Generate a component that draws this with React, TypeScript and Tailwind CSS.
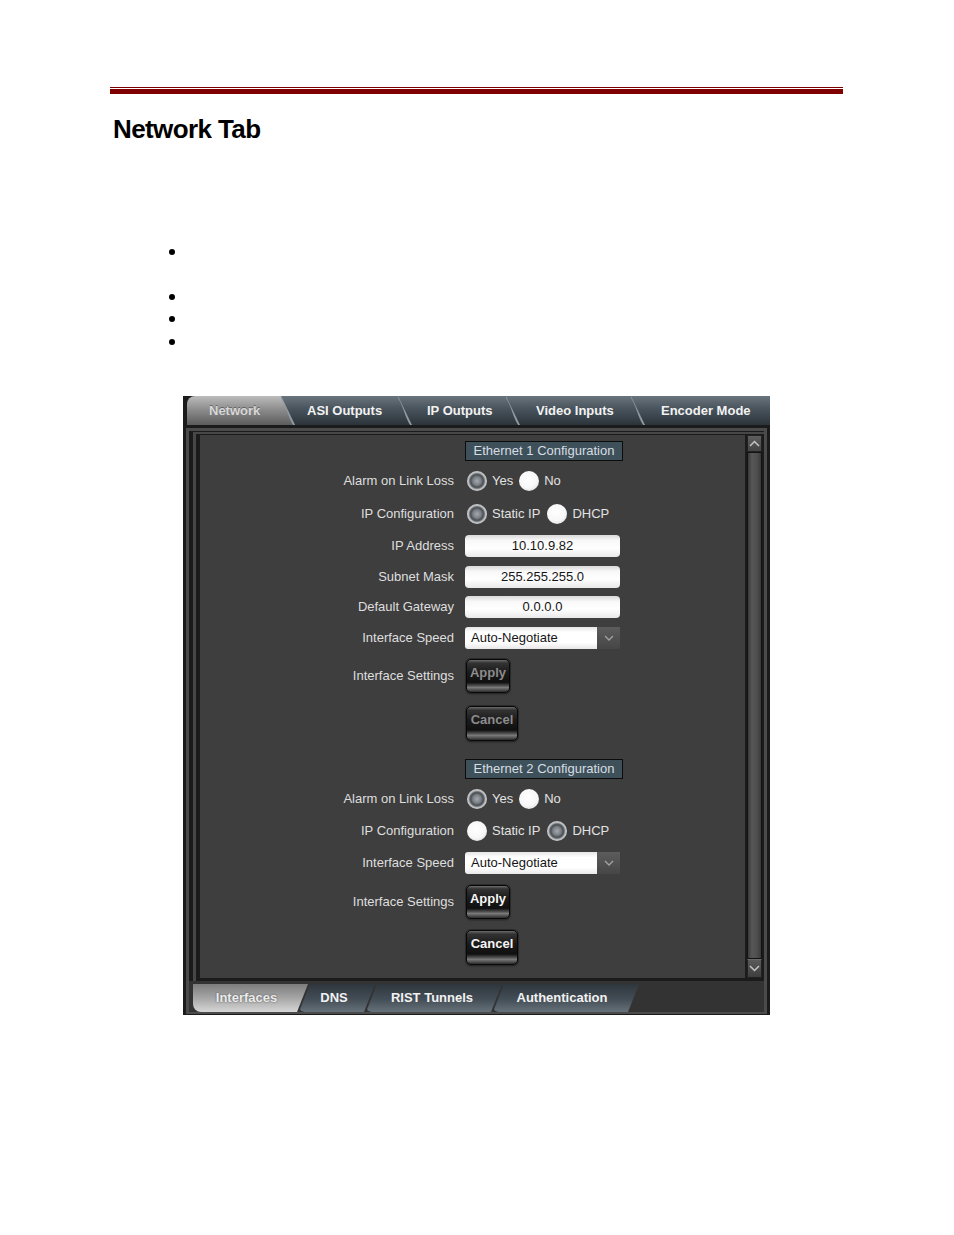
import React from "react";

const TOP_CLIP = "[clip-path:polygon(0_0,calc(100%_-_14px)_0,100%_100%,0_100%)]";
const BOT_FIRST = "[clip-path:polygon(0_0,100%_0,calc(100%_-_11px)_100%,0_100%)]";
const BOT_CLIP = "[clip-path:polygon(11px_0,100%_0,calc(100%_-_11px)_100%,0_100%)]";

const TAB_OFF =
  "bg-[linear-gradient(to_bottom,#6a757e_0%,#4b565f_40%,#2c343a_100%)] text-[#f2f2f2]";
const TAB_ON =
  "bg-[linear-gradient(to_bottom,#bcbcbc_0%,#8e8e8e_45%,#5c5c5c_100%)] text-[#d8d8d8] [text-shadow:0_-1px_0_rgba(0,0,0,0.35)]";
const BTAB_OFF =
  "bg-[linear-gradient(to_bottom,#2f373d_0%,#444e56_55%,#66717a_100%)] text-[#f2f2f2]";
const BTAB_ON =
  "bg-[linear-gradient(to_bottom,#7c7c7c_0%,#a6a6a6_50%,#d6d6d6_100%)] text-[#ececec] [text-shadow:0_0_2px_rgba(0,0,0,0.55)]";

function Slant() {
  return (
    <svg
      className="absolute right-0 top-0 h-full w-[14px]"
      viewBox="0 0 14 29"
      preserveAspectRatio="none"
    >
      <path d="M0 0 C 6 5, 8 22, 14 29" stroke="#8e99a1" strokeWidth="3" fill="none" />
    </svg>
  );
}

function Radio({ on, className = "" }: { on?: boolean; className?: string }) {
  return (
    <span
      className={
        on
          ? `inline-block shrink-0 w-[20px] h-[20px] rounded-full bg-[radial-gradient(circle,#a4aaaf_0%,#787e84_30%,#4b5055_44%,#5e6367_50%,#b7babc_60%,#e4e4e4_82%,#c6c6c6_100%)] ${className}`
          : `inline-block shrink-0 w-[20px] h-[20px] rounded-full bg-[radial-gradient(circle_at_45%_40%,#ffffff_0%,#f7f7f7_55%,#d6d6d6_90%,#bcbcbc_100%)] ${className}`
      }
    />
  );
}

function Row({
  label,
  className = "",
  children,
}: {
  label: string;
  className?: string;
  children: React.ReactNode;
}) {
  return (
    <div className={`flex items-center ${className}`}>
      <div className="w-[254px] shrink-0 text-right text-[13px] leading-[16px] text-[#dedede]">
        {label}
      </div>
      <div className="ml-[11px] flex items-center text-[13px] leading-[16px] text-[#e2e2e2]">
        {children}
      </div>
    </div>
  );
}

function Field({ value }: { value: string }) {
  return (
    <div className="w-[155px] h-[22px] rounded-[4px] bg-[linear-gradient(to_bottom,#d9d9d9_0%,#f8f8f8_25%,#ffffff_60%,#e9e9e9_100%)] text-center text-[13px] leading-[22px] text-[#141414]">
      {value}
    </div>
  );
}

function Select() {
  return (
    <div className="flex h-[22px]">
      <div className="w-[132px] h-full rounded-l-[3px] bg-[linear-gradient(to_bottom,#e6e6e6_0%,#ffffff_25%,#ffffff_70%,#e8e8e8_100%)] pl-[6px] text-[13px] leading-[22px] text-[#141414]">
        Auto-Negotiate
      </div>
      <div className="w-[23px] h-full bg-[linear-gradient(to_bottom,#5c5c5c,#464646)] flex items-center justify-center">
        <svg width="10" height="6" viewBox="0 0 10 6">
          <polyline points="1,1 5,5 9,1" fill="none" stroke="#a3a3a3" strokeWidth="1.3" />
        </svg>
      </div>
    </div>
  );
}

function Btn({
  label,
  enabled,
  className = "",
}: {
  label: string;
  enabled?: boolean;
  className?: string;
}) {
  return (
    <div
      className={`ml-[1px] rounded-[5px] border border-[#080808] shadow-[0_0_0_1px_#2a2a2a,0_1px_2px_rgba(0,0,0,0.6)] bg-[linear-gradient(to_bottom,#6b6b6b_0%,#333333_9%,#1a1a1a_40%,#101010_70%,#4e4e4e_80%,#7a7a7a_86%,#2b2b2b_100%)] flex justify-center pt-[5px] text-[13px] leading-[16px] font-bold ${
        enabled ? "text-[#f5f5f5]" : "text-[#8c8c8c]"
      } ${className}`}
    >
      {label}
    </div>
  );
}

function Header({ text, className = "" }: { text: string; className?: string }) {
  return (
    <div
      className={`ml-[265px] w-[158px] h-[20px] border border-[#0c0c0c] bg-[#3e515b] text-center text-[13px] leading-[18px] text-[#d6dde1] ${className}`}
    >
      {text}
    </div>
  );
}

function Chevron({ up }: { up?: boolean }) {
  return (
    <svg width="11" height="7" viewBox="0 0 11 7">
      <polyline
        points={up ? "1,6 5.5,1.5 10,6" : "1,1 5.5,5.5 10,1"}
        fill="none"
        stroke="#c4c4c4"
        strokeWidth="1.5"
      />
    </svg>
  );
}

export default function App() {
  return (
    <div className="w-[954px] h-[1235px] bg-white overflow-hidden [font-family:'Liberation_Sans',Arial,sans-serif]">
      {/* header rule */}
      <div className="pt-[87px] pl-[110px]">
        <div className="w-[733px] h-[1px] bg-[#7d0000]" />
        <div className="w-[733px] h-[5px] mt-[1px] bg-[#800000]" />
      </div>

      <h1 className="mt-[20px] ml-[113px] text-[26px] leading-[30px] tracking-[-0.6px] font-bold text-black">
        Network Tab
      </h1>

      {/* bullets */}
      <ul className="ml-[169px]">
        <li className="mt-[105px] w-[6px] h-[6px] rounded-full bg-black" />
        <li className="mt-[39px] w-[6px] h-[6px] rounded-full bg-black" />
        <li className="mt-[16px] w-[6px] h-[6px] rounded-full bg-black" />
        <li className="mt-[17px] w-[6px] h-[6px] rounded-full bg-black" />
      </ul>

      {/* screenshot panel */}
      <div className="mt-[51px] ml-[183px] w-[587px] h-[619px] bg-[#1b1b1b] flex flex-col">
        {/* top tabs */}
        <div className="h-[29px] shrink-0 flex pl-[4px] text-[13px] font-bold">
          <div className={`relative z-[5] w-[108px] h-full rounded-tl-[8px] pl-[22px] flex items-center ${TOP_CLIP} ${TAB_ON}`}>
            Network
            <Slant />
          </div>
          <div className={`relative z-[4] -ml-[14px] w-[131px] h-full pl-[26px] flex items-center ${TOP_CLIP} ${TAB_OFF}`}>
            ASI Outputs
            <Slant />
          </div>
          <div className={`relative z-[3] -ml-[14px] w-[122px] h-full pl-[29px] flex items-center ${TOP_CLIP} ${TAB_OFF}`}>
            IP Outputs
            <Slant />
          </div>
          <div className={`relative z-[2] -ml-[14px] w-[139px] h-full pl-[30px] flex items-center ${TOP_CLIP} ${TAB_OFF}`}>
            Video Inputs
            <Slant />
          </div>
          <div className={`relative z-[1] -ml-[14px] w-[139px] h-full pl-[30px] flex items-center ${TAB_OFF}`}>
            Encoder Mode
          </div>
        </div>

        {/* body */}
        <div className="flex-1 min-h-0 flex flex-col pt-[3px] px-[3px] pb-[1px]">
          <div className="flex-1 min-h-0 flex flex-col border-[3px] border-b-[2px] border-[#4b4b4b] bg-[#1b1b1b]">
            {/* inner panel */}
            <div className="flex-1 min-h-0 flex pl-[4px] pt-[1px]">
              <div className="flex-1 min-h-0 flex border-l-[3px] border-t-[2px] border-[#474747] pl-[4px] pt-[1px] pb-[3px] bg-[#1b1b1b]">
                <div className="flex-1 bg-[#3e3e3e] flex flex-col">
                  <Header text="Ethernet 1 Configuration" className="mt-[6px]" />
                  <Row label="Alarm on Link Loss" className="mt-[7px] h-[26px]">
                    <Radio on className="ml-[2px]" />
                    <span className="ml-[5px]">Yes</span>
                    <Radio className="ml-[6px]" />
                    <span className="ml-[5px]">No</span>
                  </Row>
                  <Row label="IP Configuration" className="mt-[7px] h-[26px]">
                    <Radio on className="ml-[2px]" />
                    <span className="ml-[5px]">Static IP</span>
                    <Radio className="ml-[7px]" />
                    <span className="ml-[5px]">DHCP</span>
                  </Row>
                  <Row label="IP Address" className="mt-[8px] h-[22px]">
                    <Field value="10.10.9.82" />
                  </Row>
                  <Row label="Subnet Mask" className="mt-[9px] h-[22px]">
                    <Field value="255.255.255.0" />
                  </Row>
                  <Row label="Default Gateway" className="mt-[8px] h-[22px]">
                    <Field value="0.0.0.0" />
                  </Row>
                  <Row label="Interface Speed" className="mt-[9px] h-[22px]">
                    <Select />
                  </Row>
                  <Row label="Interface Settings" className="mt-[10px] h-[34px]">
                    <Btn label="Apply" className="w-[44px] h-[34px]" />
                  </Row>
                  <div className="mt-[13px] ml-[265px]">
                    <Btn label="Cancel" className="w-[52px] h-[35px]" />
                  </div>

                  <Header text="Ethernet 2 Configuration" className="mt-[18px]" />
                  <Row label="Alarm on Link Loss" className="mt-[7px] h-[26px]">
                    <Radio on className="ml-[2px]" />
                    <span className="ml-[5px]">Yes</span>
                    <Radio className="ml-[6px]" />
                    <span className="ml-[5px]">No</span>
                  </Row>
                  <Row label="IP Configuration" className="mt-[6px] h-[26px]">
                    <Radio className="ml-[2px]" />
                    <span className="ml-[5px]">Static IP</span>
                    <Radio on className="ml-[7px]" />
                    <span className="ml-[5px]">DHCP</span>
                  </Row>
                  <Row label="Interface Speed" className="mt-[8px] h-[22px]">
                    <Select />
                  </Row>
                  <Row label="Interface Settings" className="mt-[11px] h-[34px]">
                    <Btn label="Apply" enabled className="w-[44px] h-[34px]" />
                  </Row>
                  <div className="mt-[11px] ml-[265px]">
                    <Btn label="Cancel" enabled className="w-[52px] h-[35px]" />
                  </div>
                </div>

                {/* scrollbar */}
                <div className="w-[15px] ml-[2px] mr-[2px] flex flex-col">
                  <div className="h-[17px] bg-[linear-gradient(to_bottom,#5e5e5e,#444444)] border border-[#222222] flex items-center justify-center">
                    <Chevron up />
                  </div>
                  <div className="flex-1 border border-[#121212] bg-[linear-gradient(to_right,#3a3a3a,#565656_30%,#4e4e4e_70%,#3a3a3a)]" />
                  <div className="h-[19px] bg-[linear-gradient(to_bottom,#5a5a5a,#3e3e3e)] border border-[#222222] border-t-[#6a6a6a] flex items-center justify-center">
                    <Chevron />
                  </div>
                </div>
              </div>
            </div>

            {/* bottom tabs */}
            <div className="h-[31px] shrink-0 bg-[#333333] flex pl-[4px] pt-[3px] text-[13px] font-bold">
              <div className={`relative z-[4] w-[115px] h-[28px] rounded-bl-[8px] flex items-center justify-center pr-[8px] ${BOT_FIRST} ${BTAB_ON}`}>
                Interfaces
              </div>
              <div className={`relative z-[3] -ml-[9px] w-[76px] h-[28px] rounded-bl-[6px] flex items-center justify-center pr-[6px] ${BOT_CLIP} ${BTAB_OFF}`}>
                DNS
              </div>
              <div className={`relative z-[2] -ml-[9px] w-[136px] h-[28px] rounded-bl-[6px] flex items-center justify-center pr-[4px] ${BOT_CLIP} ${BTAB_OFF}`}>
                RIST Tunnels
              </div>
              <div className={`relative z-[1] -ml-[9px] w-[146px] h-[28px] rounded-bl-[6px] flex items-center justify-center pr-[8px] ${BOT_CLIP} ${BTAB_OFF}`}>
                Authentication
              </div>
            </div>
          </div>
        </div>
      </div>
    </div>
  );
}
